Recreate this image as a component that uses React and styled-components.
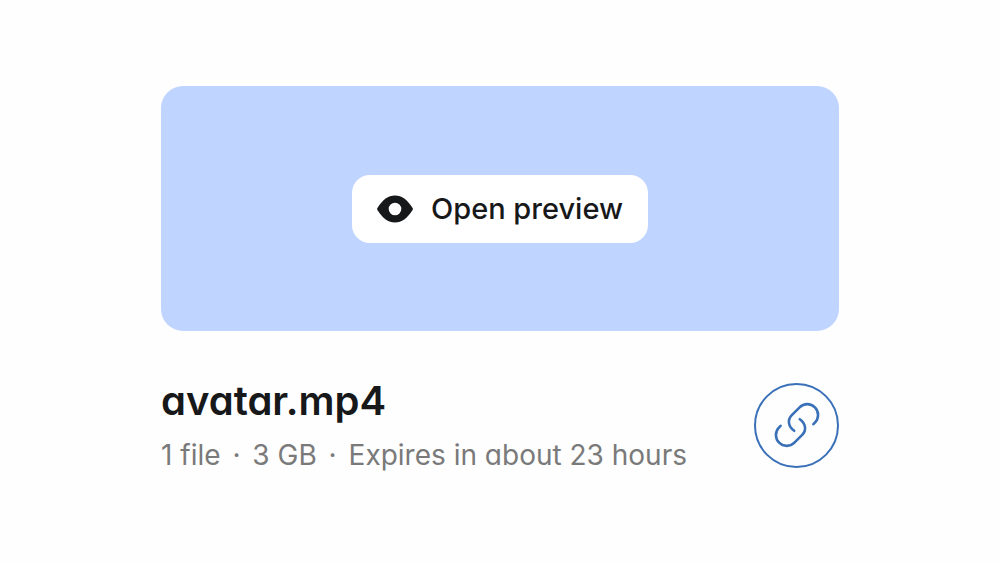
import React from "react";
import styled, { createGlobalStyle } from "styled-components";

const GlobalStyle = createGlobalStyle`
	* {
		box-sizing: border-box;
	}

	body {
		margin: 0;
		background: #fefefe;
		color: #17181a;
		font-family: Inter, "Liberation Sans", sans-serif;
	}
`;

const TransferCard = styled.main`
	max-width: 1000px;
	margin: 0 auto;
	padding: 86px 161px;
`;

const Preview = styled.section`
	display: flex;
	align-items: center;
	justify-content: center;
	min-height: 245px;
	padding: 24px;
	border-radius: 22px;
	background: #bfd5ff;
`;

const PreviewButton = styled.button`
	cursor: pointer;
	display: flex;
	align-items: center;
	gap: 18px;
	height: 68px;
	padding: 0 25px;
	border: none;
	border-radius: 18px;
	background: white;
	color: inherit;
	font-family: inherit;
	font-size: 29px;
	font-weight: 500;
	white-space: nowrap;
`;

const Details = styled.footer`
	display: flex;
	align-items: center;
	justify-content: space-between;
	margin-top: 46px;
`;

const FileName = styled.h1`
	margin: 0;
	font-size: 40px;
	font-weight: 600;
	line-height: 48px;
	font-feature-settings: "cv11";
`;

const FileMeta = styled.p`
	margin: 12px 0 0;
	color: #7a7a7a;
	font-size: 28px;
	line-height: 36px;
	font-feature-settings: "cv11";
`;

const Separator = styled.span`
	margin: 0 4px;
`;

const LinkButton = styled.button`
	cursor: pointer;
	display: flex;
	flex-shrink: 0;
	align-items: center;
	justify-content: center;
	width: 85px;
	height: 85px;
	padding: 0;
	border: 2px solid #3a70b8;
	border-radius: 50%;
	background: transparent;
	color: #3a70b8;
`;

const EyeIcon = () => (
	<svg width="36" height="28" viewBox="0 0 36 28" fill="currentColor" aria-hidden="true">
		<path
			fillRule="evenodd"
			d="M18 .5C25 .5 30 4.500 35.600 13Q36.200 14 35.600 15C30 23.500 25 27.500 18 27.500S6 23.500 .4 15Q-.2 14 .4 13C6 4.500 11 .5 18 .5ZM18 7.700A6.300 6.300 0 1 0 18 20.300A6.300 6.300 0 1 0 18 7.700Z"
		/>
	</svg>
);

const LinkIcon = () => (
	<svg
		width="48"
		height="48"
		viewBox="-24 -24 48 48"
		fill="none"
		stroke="currentColor"
		strokeWidth="2.600"
		strokeLinecap="round"
		aria-hidden="true"
	>
		<path d="M-2.800 5.800C-8.800 1.500 -9.800 -5.200 -5.200 -9.900L2.600 -17.700A10.800 10.800 0 0 1 17.900 -2.400L16.400 -.8" />
		<path d="M2.800 -5.800C8.800 -1.500 9.800 5.200 5.200 9.900L-2.600 17.700A10.800 10.800 0 0 1 -17.900 2.400L-16.400 .8" />
	</svg>
);

const App = () => (
	<>
		<GlobalStyle />
		<TransferCard>
			<Preview>
				<PreviewButton type="button">
					<EyeIcon />
					Open preview
				</PreviewButton>
			</Preview>
			<Details>
				<div>
					<FileName>avatar.mp4</FileName>
					<FileMeta>
						1 file <Separator>·</Separator> 3 GB <Separator>·</Separator> Expires in about 23 hours
					</FileMeta>
				</div>
				<LinkButton type="button" aria-label="Copy link">
					<LinkIcon />
				</LinkButton>
			</Details>
		</TransferCard>
	</>
);

export default App;
